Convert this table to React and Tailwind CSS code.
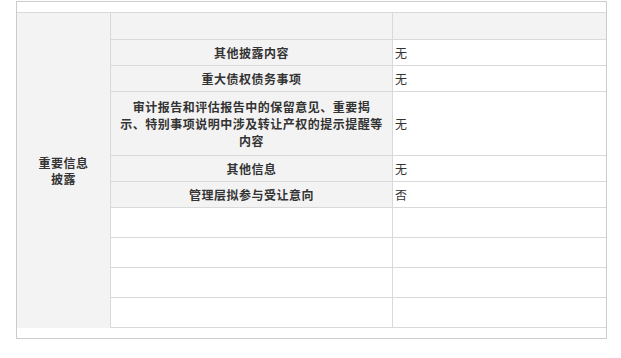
const rows = [
  { label: "其他披露内容", value: "无" },
  { label: "重大债权债务事项", value: "无" },
  {
    label: ["审计报告和评估报告中的保留意见、重要揭", "示、特别事项说明中涉及转让产权的提示提醒等", "内容"],
    value: "无",
    tall: true,
  },
  { label: "其他信息", value: "无" },
  { label: "管理层拟参与受让意向", value: "否" },
];

export default function App() {
  return (
    <div className="w-[621px] h-[358px] bg-white pt-[1px] font-['Noto_Sans_CJK_SC',sans-serif] text-[12px] text-[#333]">
      <div className="ml-[16px] w-[591px] border border-[#cccccc]">
        <div className="h-[11px] border-b border-[#d9d9d9]" />
        <div className="flex">
          <div className="w-[94px] shrink-0 bg-[#f3f3f3] border-r border-[#d9d9d9] flex items-center justify-center text-center font-bold tracking-[0.5px] leading-[16px]">
            <div>
              重要信息
              <br />
              披露
            </div>
          </div>
          <div className="flex-1 flex flex-col">
            <div className="flex h-[27px] border-b border-[#d9d9d9] bg-[#f3f3f3]">
              <div className="w-[282px] shrink-0 border-r border-[#d9d9d9]" />
              <div className="flex-1" />
            </div>
            {rows.map((r, i) => (
              <div
                key={i}
                className={`flex border-b border-[#d9d9d9] ${r.tall ? "h-[64px]" : "h-[26px]"}`}
              >
                <div className="w-[282px] shrink-0 border-r border-[#d9d9d9] bg-[#f3f3f3] flex items-center justify-center text-center font-bold tracking-[0.5px] leading-[17px]">
                  {Array.isArray(r.label) ? (
                    <div>
                      {r.label.map((l, j) => (
                        <div key={j}>{l}</div>
                      ))}
                    </div>
                  ) : (
                    r.label
                  )}
                </div>
                <div className="flex-1 flex items-center pl-[2px]">{r.value}</div>
              </div>
            ))}
            {[0, 1, 2, 3].map((i) => (
              <div key={i} className="flex h-[30px] border-b border-[#d9d9d9]">
                <div className="w-[282px] shrink-0 border-r border-[#d9d9d9]" />
                <div className="flex-1" />
              </div>
            ))}
          </div>
        </div>
        <div className="h-[10px]" />
      </div>
    </div>
  );
}
